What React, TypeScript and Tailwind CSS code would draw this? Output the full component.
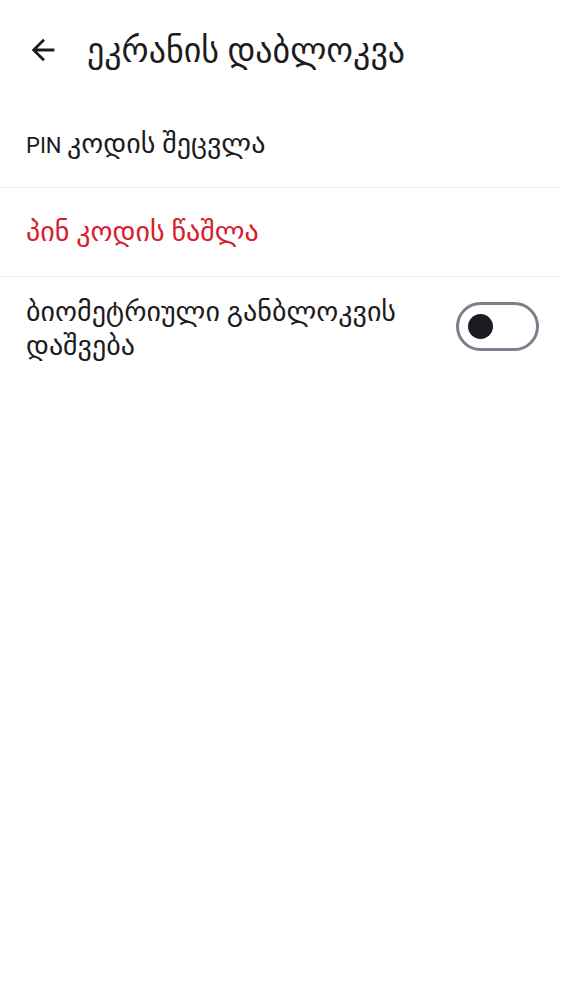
import React, { useState } from 'react';

const font = { fontFamily: 'Roboto, "DejaVu Sans", sans-serif' };

const App: React.FC = () => {
   const [bio, setBio] = useState(false);

   return (
      <div className="min-h-screen bg-white text-[#1d1b20]" style={font}>
         <header className="h-[100px] flex items-center pl-[26px] gap-[27px]">
            <button className="flex items-center justify-center">
               <svg width="34" height="34" viewBox="0 0 24 24" fill="#1d1b20">
                  <path d="M20 11H7.83l5.59-5.59L12 4l-8 8 8 8 1.41-1.41L7.83 13H20v-2z" />
               </svg>
            </button>
            <h1 className="text-[34px] leading-none">ეკრანის დაბლოკვა</h1>
         </header>

         <div className="flex flex-col">
            <button className="h-[88px] flex items-center px-[26px] text-left text-[22px] border-b border-[#ececf1]">
               <span>PIN <span className="text-[28px]">კოდის შეცვლა</span></span>
            </button>
            <button className="h-[89px] flex items-center px-[26px] text-left text-[28px] text-[#d7202e] border-b border-[#ececf1]">
               პინ კოდის წაშლა
            </button>
            <div className="flex items-center justify-between pl-[26px] pr-[23px] py-[18px]">
               <p className="text-[28px] leading-[34px] max-w-[400px]">ბიომეტრიული განბლოკვის დაშვება</p>
               <button
                  onClick={() => setBio(!bio)}
                  className="w-[83px] h-[49px] mb-[6px] rounded-full border-[3px] border-[#79808c] flex items-center px-[9px] shrink-0"
               >
                  <span className="size-[25px] rounded-full bg-[#1d1b20]"></span>
               </button>
            </div>
         </div>
      </div>
   );
};

export default App;
